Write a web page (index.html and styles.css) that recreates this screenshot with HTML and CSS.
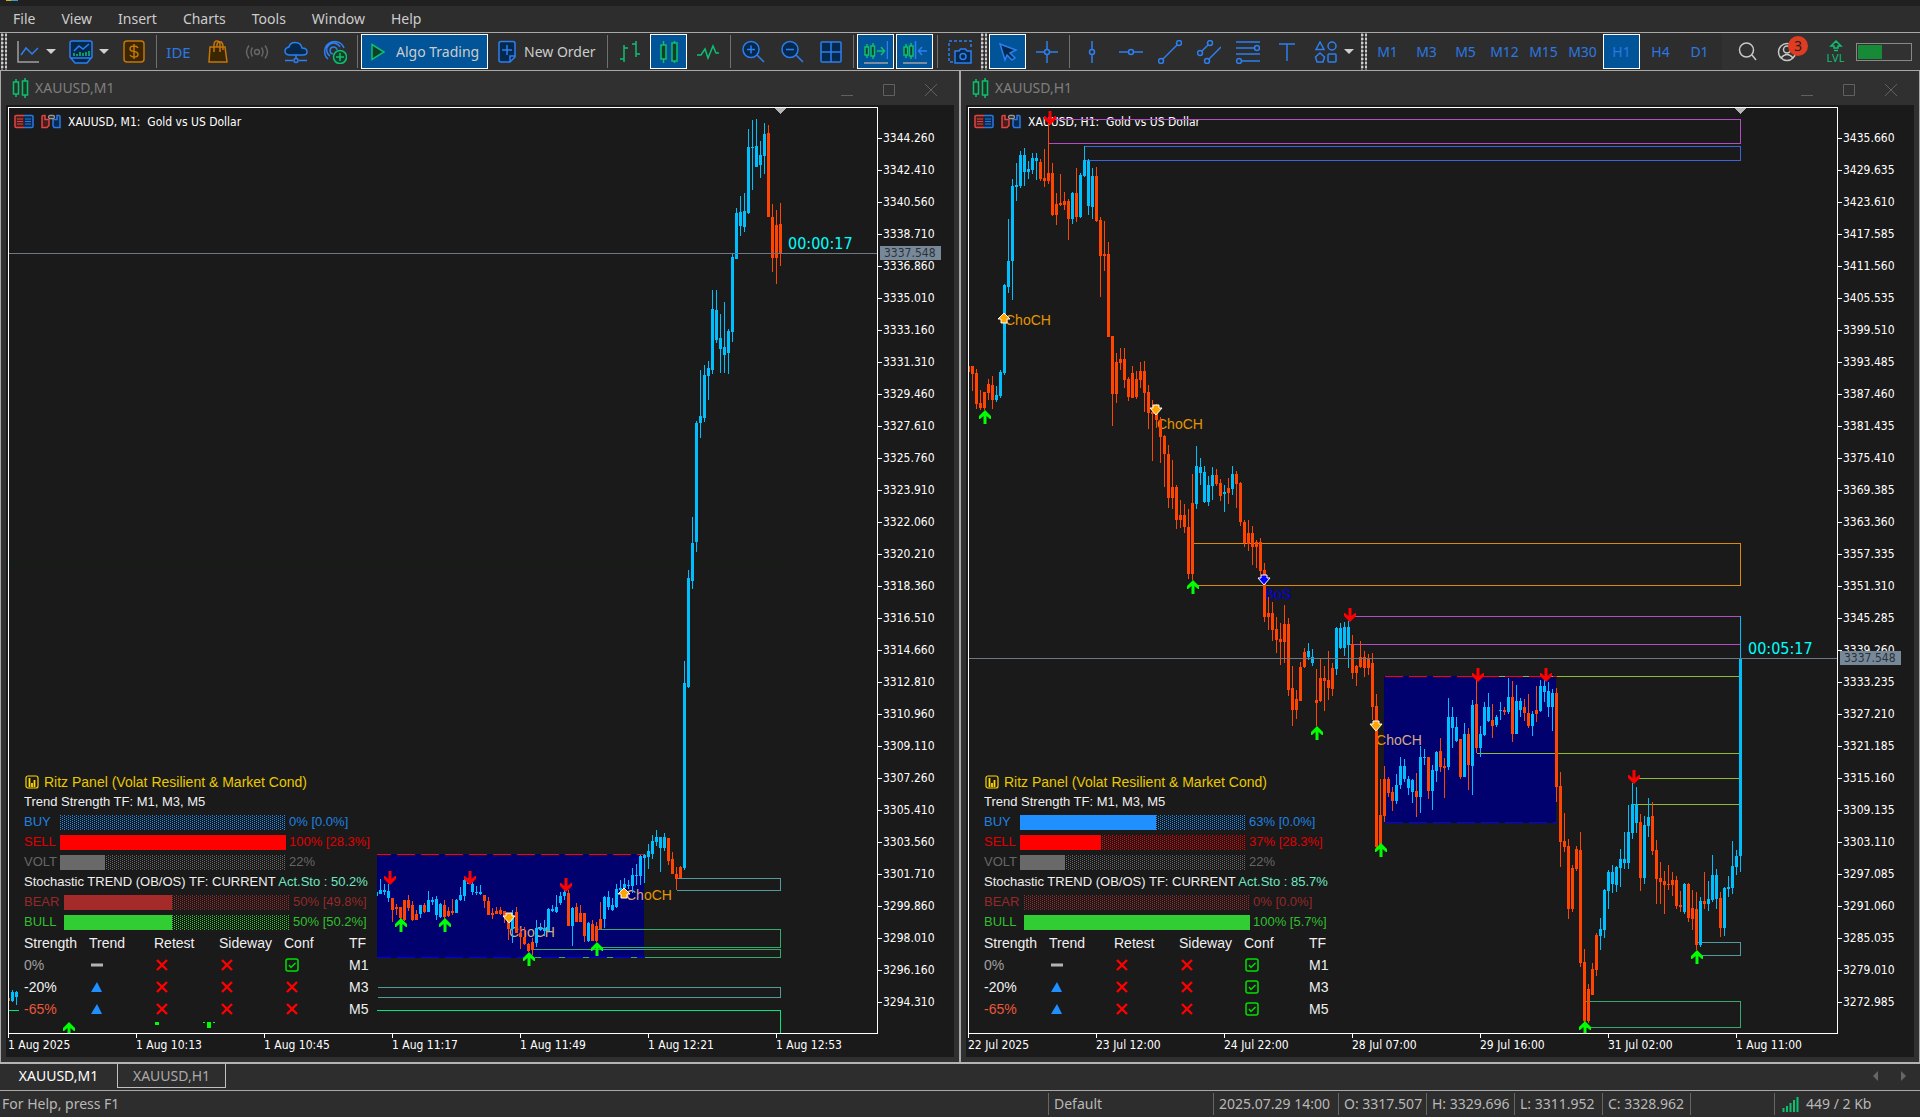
FILE: index.html
```html
<!DOCTYPE html>
<html lang="en">
<head>
<meta charset="utf-8">
<title>XAUUSD,M1</title>
<link rel="stylesheet" href="styles.css">
</head>
<body>
<svg class="defs" aria-hidden="true">
  <symbol id="up" viewBox="0 0 12 14"><path d="M6 0L12 6V9H11L7.500 6V14H4.500V6L1 9H0V6Z"/></symbol>
  <symbol id="down" viewBox="0 0 12 14"><path d="M6 14L12 8V5H11L7.500 8V0H4.500V8L1 5H0V8Z"/></symbol>
  <symbol id="mark-down" viewBox="0 0 14 12"><path d="M4 1H10V4H13L7 11L1 4H4Z" stroke="#fff"/></symbol>
  <symbol id="mark-up" viewBox="0 0 14 12"><path d="M4 11H10V7H13L7 1L1 7H4Z" stroke="#fff"/></symbol>
  <symbol id="cross" viewBox="0 0 14 14"><path d="M2 2L12 12M12 2L2 12" stroke="#f00" stroke-width="2.4"/></symbol>
  <symbol id="check" viewBox="0 0 14 14"><rect x="1" y="1" width="12" height="12" rx="2" fill="none" stroke="#00e000" stroke-width="1.5"/><path d="M4 7L6 9.500L10.500 5" fill="none" stroke="#00e000" stroke-width="1.5"/></symbol>
  <symbol id="flat" viewBox="0 0 14 14"><path d="M1 7H13" stroke="#b4b4b4" stroke-width="3"/></symbol>
  <symbol id="rise" viewBox="0 0 14 14"><path d="M7 2L12 12H1Z" fill="#1e90ff"/></symbol>
  <symbol id="candles" viewBox="0 0 18 20"><path d="M4 1V19M13 0V20" stroke="#0fbf70" stroke-width="1.5"/><path d="M1.500 4H6.500V16H1.500ZM10.500 3H15.500V17H10.500Z" fill="#1d3a24" stroke="#0fbf70" stroke-width="1.5"/></symbol>
  <symbol id="book" viewBox="0 0 20 14"><path d="M10 1H2Q1 1 1 2V12Q1 13 2 13H10" fill="#4a1c1c" stroke="#e04444" stroke-width="1.500"/><path d="M10 1H18Q19 1 19 2V12Q19 13 18 13H10" fill="#062a50" stroke="#2b78e4" stroke-width="1.500"/><path d="M3 4.500H9M3 7H9M3 9.500H9" stroke="#e04444"/><path d="M11 4.500H17M11 7H17M11 9.500H17" stroke="#2b78e4"/></symbol>
  <symbol id="trade" viewBox="0 0 20 14"><path d="M1 2Q1 1 2 1H4V5H8V11L6 13H1Z" fill="#4a1c1c" stroke="#e04444" stroke-width="1.500"/><path d="M19 2Q19 1 18 1H16V5H12V11L13 13H19Z" fill="#062a50" stroke="#2b78e4" stroke-width="1.500"/><rect x="7.500" y="1" width="6" height="3" rx="1.500" fill="none" stroke="#999" stroke-width="1.300"/></symbol>
  <symbol id="panel" viewBox="0 0 14 14"><rect x="1" y="1" width="12" height="12" rx="2" fill="none" stroke="#ffd700" stroke-width="1.200"/><path d="M4.500 3V12M7 8V12M9.500 5V12" stroke="#ffd700" stroke-width="1.800"/></symbol>
</svg>

<div class="caption"><i></i><i></i></div>
<nav class="menu">
  <a href="#">File</a><a href="#">View</a><a href="#">Insert</a><a href="#">Charts</a><a href="#">Tools</a><a href="#">Window</a><a href="#">Help</a>
</nav>

<div class="toolbar">
  <div class="grip"></div>
  <button class="drop" aria-label="Chart"><svg viewBox="0 0 24 24"><path class="gy" d="M2 1V22H23"/><path class="bl" d="M5 15L10 8L16 14L22 8"/></svg></button>
  <button class="drop" aria-label="Indicators"><svg viewBox="0 0 24 24"><path class="bl fb" d="M1 3Q1 1 3 1H21Q23 1 23 3V17L18 23H6L1 17ZM1 18H23"/><path class="bl" d="M5 11L10 6L14 9L20 4"/><path class="gr" d="M5 16V13M8 16V14M11 16V12M14 16V13M17 16V12M20 16V11"/></svg></button>
  <button aria-label="Dollar"><svg viewBox="0 0 24 24"><rect class="or fo" x="2" y="1" width="20" height="21" rx="3"/><path class="or" d="M16 8Q15 6 12 6Q8 6 8 9Q8 11 12 11.500Q16 12 16 14.500Q16 17 12 17Q9 17 8 15M12 4V19"/></svg></button>
  <div class="sep"></div>
  <button class="blue ide">IDE</button>
  <button aria-label="Market"><svg viewBox="0 0 24 24"><path class="or fo" d="M4 7H19L21 22H3Z"/><path class="or" d="M8 12V5Q8 1 11 1Q14 1 14 5V12M11 7V4Q12 1 15 2Q17 3 17 7V10"/></svg></button>
  <button aria-label="Signals"><svg viewBox="0 0 24 24"><g class="dim"><circle cx="12" cy="12" r="2.500"/><path d="M7.500 7.500Q4.500 12 7.500 16.500M16.500 7.500Q19.500 12 16.500 16.500M4 5.500Q-1 12 4 18.500M20 5.500Q25 12 20 18.500"/></g></svg></button>
  <button aria-label="VPS"><svg viewBox="0 0 24 24"><path class="bl fb" d="M6 15Q1 15 1 11Q1 8 5 7Q6 2.500 11 2.500Q17 2.500 18 8Q23 8 23 12Q23 15 19 15Z"/><path class="bl" d="M12 15V19M1 20.500H9M15 20.500H23"/><circle class="bl" cx="12" cy="20.500" r="2"/></svg></button>
  <button aria-label="Broadcast"><svg viewBox="0 0 24 24"><path class="bl" d="M5 19A10 10 0 1 1 21 8M7 16A7 7 0 1 1 17 7M10 14A3.500 3.500 0 1 1 14 10"/><circle class="gr fg" cx="17" cy="17" r="6.500"/><path class="gr" d="M17 13V21M13 17H21"/></svg></button>
  <div class="sep"></div>
  <button class="wide on algo"><svg viewBox="0 0 24 24"><path class="gr fg" d="M6 4.500L18 12L6 19.500Z"/></svg>Algo Trading</button>
  <button class="wide order"><svg viewBox="0 0 24 24"><path class="bl fb" d="M6 1.500H18Q20 1.500 20 3.500V17L15 22H6Q4 22 4 20V3.500Q4 1.500 6 1.500Z"/><path class="bl" d="M12 5V15M7 10H17M20 16H15V22"/></svg>New Order</button>
  <div class="sep"></div>
  <button aria-label="Bars"><svg viewBox="0 0 24 24"><path class="gr" d="M6 5V22M2 19H6M6 8H10M18 1V17M14 4H18M18 14H22"/></svg></button>
  <button class="on" aria-label="Candles"><svg viewBox="0 0 24 24"><path class="gr" d="M6.500 1V23M17.500 1V23"/><path class="gr fg" d="M4 5H9V19H4ZM15 3H20V21H15Z"/></svg></button>
  <button aria-label="Line"><svg viewBox="0 0 24 24"><path class="gr" d="M1 15H5L9 9L12 18L17 6L20 13H23"/></svg></button>
  <div class="sep"></div>
  <button aria-label="Zoom in"><svg viewBox="0 0 24 24"><circle class="bl fb" cx="10" cy="9.500" r="8"/><path class="bl" d="M16 15L23 22M6 9.500H14M10 5.500V13.500"/></svg></button>
  <button aria-label="Zoom out"><svg viewBox="0 0 24 24"><circle class="bl fb" cx="10" cy="9.500" r="8"/><path class="bl" d="M16 15L23 22M6 9.500H14"/></svg></button>
  <button aria-label="Tile"><svg viewBox="0 0 24 24"><rect class="bl fb" x="2" y="2" width="20" height="20" rx="1"/><path class="bl" d="M12 2V22M2 12H22"/></svg></button>
  <div class="sep"></div>
  <button class="on" aria-label="Auto scroll"><svg viewBox="0 0 24 24"><path class="gr" d="M3 4V18M9 3V19M13 11H20M17 7L20.500 11L17 15"/><path class="gr fg" d="M1 7H4.500V15H1ZM7 6H10.500V16H7Z"/><path class="bl" d="M23.500 1V19"/><path class="gy" d="M0 23H24"/></svg></button>
  <button class="on" aria-label="Chart shift"><svg viewBox="0 0 24 24"><path class="gr" d="M3 4V18M8 3V19"/><path class="gr fg" d="M1 7H4.500V15H1ZM6.500 6H10V16H6.500Z"/><path class="bl" d="M12.500 1V19M24 11H16M19 7L15.500 11L19 15"/><path class="gy" d="M0 23H24"/></svg></button>
  <div class="sep"></div>
  <button aria-label="Screenshot"><svg viewBox="0 0 24 24"><path class="bl dash" d="M5 22H1V1H23V8"/><path class="bl fb" d="M7 11H11L12.500 9H17.500L19 11H23V23H7Z"/><circle class="bl" cx="15" cy="16.500" r="3"/></svg></button>
  <div class="grip second"></div>
  <button class="on" aria-label="Cursor"><svg viewBox="0 0 24 24"><path class="bl fb" d="M4 4L20 10L14 13L19 18L16 20L11 15L9 20Z"/></svg></button>
  <button aria-label="Crosshair"><svg viewBox="0 0 24 24"><path class="bl" d="M12 1V9.500M12 14.500V23M1 12H9.500M14.500 12H23"/><circle class="bl" cx="12" cy="12" r="2.500"/></svg></button>
  <div class="sep"></div>
  <button aria-label="Vertical line"><svg viewBox="0 0 24 24"><path class="bl" d="M12 1V9.500M12 14.500V23"/><circle class="bl" cx="12" cy="12" r="2.500"/></svg></button>
  <button aria-label="Horizontal line"><svg viewBox="0 0 24 24"><path class="bl" d="M0 12H9.500M14.500 12H24"/><circle class="bl" cx="12" cy="12" r="2.500"/></svg></button>
  <button aria-label="Trendline"><svg viewBox="0 0 24 24"><path class="bl" d="M5 19L19 5"/><circle class="bl" cx="3" cy="21" r="2.500"/><circle class="bl" cx="21" cy="3" r="2.500"/></svg></button>
  <button aria-label="Channel"><svg viewBox="0 0 24 24"><path class="bl" d="M5 11L11 5M12 19L24 7"/><circle class="bl" cx="3" cy="13" r="2.500"/><circle class="bl" cx="13" cy="3" r="2.500"/><circle class="bl" cx="10" cy="21" r="2.500"/></svg></button>
  <button aria-label="Fibonacci"><svg viewBox="0 0 24 24"><path class="bl" d="M0 2H24M0 8H18M0 14H24M6 21H24"/><circle class="bl" cx="21" cy="8" r="2.500"/><circle class="bl" cx="3" cy="21" r="2.500"/></svg></button>
  <button aria-label="Text"><svg viewBox="0 0 24 24"><path class="bl" d="M4 4H20M12 4V21"/></svg></button>
  <button class="drop" aria-label="Shapes"><svg viewBox="0 0 24 24"><path class="bl" d="M6 2L10 9.500H2ZM6 13L10.500 17L9 22H3L1.500 17Z"/><circle class="bl" cx="18" cy="6" r="4"/><rect class="bl" x="14" y="14" width="8" height="8" rx="1"/></svg></button>
  <div class="grip"></div>
  <button class="blue">M1</button><button class="blue">M3</button><button class="blue">M5</button><button class="blue">M12</button><button class="blue">M15</button><button class="blue">M30</button><button class="blue on">H1</button><button class="blue">H4</button><button class="blue">D1</button>
  <div class="account">
    <button aria-label="Search"><svg viewBox="0 0 24 24"><g class="lt"><circle cx="10.500" cy="10" r="7"/><path d="M16 15L20 20"/></g></svg></button>
    <button class="user" aria-label="Account"><svg viewBox="0 0 24 24"><g class="lt"><circle cx="12" cy="12" r="8.500"/><circle cx="12" cy="9.500" r="3.500"/><path d="M6 18Q12 11 18 18"/></g></svg><span class="badge">3</span></button>
    <button class="lvl" aria-label="Level"><svg viewBox="0 0 14 12"><path class="gr" d="M7 1L12 6H9V8H5V6H2ZM5 10.500H9"/></svg>LVL</button>
    <div class="meter"><span></span></div>
  </div>
</div>

<main class="desk">
  <section class="window" data-chart="m1">
    <header class="title"><svg><use href="#candles"/></svg><h2>XAUUSD,M1</h2><button aria-label="Minimize"><svg viewBox="0 0 12 12"><path d="M0 11.500H12"/></svg></button><button aria-label="Maximize"><svg viewBox="0 0 12 12"><path d="M.5.5H11.500V11.500H.5Z"/></svg></button><button aria-label="Close"><svg viewBox="0 0 12 12"><path d="M0 0L12 12M12 0L0 12"/></svg></button></header>
    <div class="chart">
      <div class="plot">
        <svg class="drawing" viewBox="9 108 868 925" preserveAspectRatio="xMinYMin meet">
          <rect x="377" y="854" width="267" height="104" fill="#00006e"/>
          <g class="lines" transform="translate(.5 .5)">
            <path d="M8 563H784" stroke="#0a260a"/>
            <path d="M676 878H780V890H676M377 987H780V997H377" stroke="#559a9a"/>
            <path d="M597 929H780V947H597M531 949H780V957H531" stroke="#35ab6b"/>
            <path d="M8 1010H780V1034" stroke="#00e878"/>
            <path d="M372 854H644" stroke="#ff0000" stroke-dasharray="18 6"/>
            <path d="M372 957H644" stroke="#0000f0" stroke-dasharray="18 6"/>
          </g>
          <g class="label"><text x="509" y="937" class="tan">ChoCH</text><text x="626" y="900"><tspan class="tan">Ch</tspan>oCH</text></g>
          <g class="candles"></g>
          <path class="price" d="M8 253.500H877"/>
          <g class="signals"></g>
          <path d="M155 1022h4v3h-4zM207 1022h4v6h-4zM203 1022h2v1h-2zM213 1022h2v1h-2z" fill="#0f0"/>
          <path d="M775 108H786L780.500 114Z" fill="#b4b4b4"/>
          <text x="788" y="249" class="timer">00:00:17</text>
        </svg>
        <p class="symbol"><svg><use href="#book"/></svg><svg><use href="#trade"/></svg><span>XAUUSD, M1:&nbsp; Gold vs US Dollar</span></p>
        <div class="ritz">
          <p class="name"><svg><use href="#panel"/></svg>Ritz Panel (Volat Resilient &amp; Market Cond)</p>
          <p>Trend Strength TF: M1, M3, M5</p>
          <p class="row buy"><b>BUY</b><i><span style="width:0%"></span></i>0% [0.0%]</p>
          <p class="row sell"><b>SELL</b><i><span style="width:100%"></span></i>100% [28.3%]</p>
          <p class="row volt"><b>VOLT</b><i><span style="width:20%"></span></i>22%</p>
          <p>Stochastic TREND (OB/OS) TF: CURRENT <em>Act.Sto : 50.2%</em></p>
          <p class="row bear"><b>BEAR</b><i><span style="width:48%"></span></i>50% [49.8%]</p>
          <p class="row bull"><b>BULL</b><i><span style="width:48%"></span></i>50% [50.2%]</p>
          <table>
            <tr><th>Strength</th><th>Trend</th><th>Retest</th><th>Sideway</th><th>Conf</th><th>TF</th></tr>
            <tr><td class="mute">0%</td><td><svg><use href="#flat"/></svg></td><td><svg><use href="#cross"/></svg></td><td><svg><use href="#cross"/></svg></td><td><svg><use href="#check"/></svg></td><td>M1</td></tr>
            <tr><td>-20%</td><td><svg><use href="#rise"/></svg></td><td><svg><use href="#cross"/></svg></td><td><svg><use href="#cross"/></svg></td><td><svg><use href="#cross"/></svg></td><td>M3</td></tr>
            <tr><td class="weak">-65%</td><td><svg><use href="#rise"/></svg></td><td><svg><use href="#cross"/></svg></td><td><svg><use href="#cross"/></svg></td><td><svg><use href="#cross"/></svg></td><td>M5</td></tr>
          </table>
        </div>
      </div>
      <div class="prices"></div>
      <div class="times"><span>1 Aug 2025</span><span>1 Aug 10:13</span><span>1 Aug 10:45</span><span>1 Aug 11:17</span><span>1 Aug 11:49</span><span>1 Aug 12:21</span><span>1 Aug 12:53</span></div>
    </div>
  </section>

  <section class="window" data-chart="h1">
    <header class="title"><svg><use href="#candles"/></svg><h2>XAUUSD,H1</h2><button aria-label="Minimize"><svg viewBox="0 0 12 12"><path d="M0 11.500H12"/></svg></button><button aria-label="Maximize"><svg viewBox="0 0 12 12"><path d="M.5.5H11.500V11.500H.5Z"/></svg></button><button aria-label="Close"><svg viewBox="0 0 12 12"><path d="M0 0L12 12M12 0L0 12"/></svg></button></header>
    <div class="chart">
      <div class="plot">
        <p class="symbol"><svg><use href="#book"/></svg><svg><use href="#trade"/></svg><span>XAUUSD, H1:&nbsp; Gold vs US Dollar</span></p>
        <svg class="drawing over" viewBox="9 108 868 925" preserveAspectRatio="xMinYMin meet">
          <rect x="424" y="676" width="172" height="147" fill="#00006e"/>
          <g class="lines" transform="translate(.5 .5)">
            <path d="M88 119H780V143H88M388 616H780V644H388" stroke="#b44cc4"/>
            <path d="M124 146H780V160H124" stroke="#3e64dc"/>
            <path d="M232 543H780V585H232" stroke="#dc8a0a"/>
            <path d="M516 676H780M516 753H780M672 778H780M672 804H780" stroke="#90bb2f"/>
            <path d="M736 942H780V955H736" stroke="#559a9a"/>
            <path d="M624 1001H780V1027H624" stroke="#35ab6b"/>
            <path d="M424 676H596" stroke="#ff0000" stroke-dasharray="18 6"/>
            <path d="M424 822H596" stroke="#0000ff" stroke-dasharray="18 6"/>
          </g>
          <g class="label"><text x="45" y="325">ChoCH</text><text x="197" y="429">ChoCH</text><text x="305" y="599" class="bos">BoS</text><text x="416" y="745">C<tspan class="tan">hoCH</tspan></text></g>
          <g class="candles"></g>
          <path class="price" d="M8 658.500H877"/>
          <g class="signals"></g>
          <path d="M775 108H786L780.500 114Z" fill="#b4b4b4"/>
          <text x="788" y="654" class="timer">00:05:17</text>
        </svg>
        <div class="ritz">
          <p class="name"><svg><use href="#panel"/></svg>Ritz Panel (Volat Resilient &amp; Market Cond)</p>
          <p>Trend Strength TF: M1, M3, M5</p>
          <p class="row buy"><b>BUY</b><i><span style="width:60%"></span></i>63% [0.0%]</p>
          <p class="row sell"><b>SELL</b><i><span style="width:36%"></span></i>37% [28.3%]</p>
          <p class="row volt"><b>VOLT</b><i><span style="width:20%"></span></i>22%</p>
          <p>Stochastic TREND (OB/OS) TF: CURRENT <em>Act.Sto : 85.7%</em></p>
          <p class="row bear"><b>BEAR</b><i><span style="width:0%"></span></i>0% [0.0%]</p>
          <p class="row bull"><b>BULL</b><i><span style="width:100%"></span></i>100% [5.7%]</p>
          <table>
            <tr><th>Strength</th><th>Trend</th><th>Retest</th><th>Sideway</th><th>Conf</th><th>TF</th></tr>
            <tr><td class="mute">0%</td><td><svg><use href="#flat"/></svg></td><td><svg><use href="#cross"/></svg></td><td><svg><use href="#cross"/></svg></td><td><svg><use href="#check"/></svg></td><td>M1</td></tr>
            <tr><td>-20%</td><td><svg><use href="#rise"/></svg></td><td><svg><use href="#cross"/></svg></td><td><svg><use href="#cross"/></svg></td><td><svg><use href="#check"/></svg></td><td>M3</td></tr>
            <tr><td class="weak">-65%</td><td><svg><use href="#rise"/></svg></td><td><svg><use href="#cross"/></svg></td><td><svg><use href="#cross"/></svg></td><td><svg><use href="#check"/></svg></td><td>M5</td></tr>
          </table>
        </div>
      </div>
      <div class="prices"></div>
      <div class="times"><span>22 Jul 2025</span><span>23 Jul 12:00</span><span>24 Jul 22:00</span><span>28 Jul 07:00</span><span>29 Jul 16:00</span><span>31 Jul 02:00</span><span>1 Aug 11:00</span></div>
    </div>
  </section>
</main>

<div class="tabs">
  <button class="current">XAUUSD,M1</button><button>XAUUSD,H1</button>
  <div class="scroll"><svg viewBox="0 0 6 10"><path d="M5 0V10L0 5Z"/></svg><svg viewBox="0 0 6 10"><path d="M1 0V10L6 5Z"/></svg></div>
</div>
<footer class="status">
  <span class="help">For Help, press F1</span><span class="profile">Default</span><span class="date">2025.07.29 14:00</span><span class="quote">O: 3317.507</span><span class="quote">H: 3329.696</span><span class="quote">L: 3311.952</span><span class="quote">C: 3328.962</span><span class="blank"></span><span class="net"><svg viewBox="0 0 18 15"><path d="M1.500 11V15M5 9V15M8.500 6V15M12 3V15M15.500 0V15"/></svg>449 / 2 Kb</span>
</footer>
<script src="charts.js"></script>
</body>
</html>
```
FILE: styles.css
```css
* { box-sizing: border-box; }
body {
  margin: 0; height: 100vh; display: flex; flex-direction: column; overflow: hidden;
  background: #2d2d2d; color: #ccc;
  font: 14px/20px "Noto Sans", "Open Sans", sans-serif;
}
p, h2 { margin: 0; font: inherit; }
button { border: 0; padding: 0; margin: 0; background: none; color: inherit; font: inherit; }
svg { display: block; flex: none; }
.defs { position: absolute; width: 0; height: 0; }

.caption { height: 6px; background: #202020; display: flex; padding-left: 6px; flex: none; }
.caption i { width: 5px; height: 1px; background: #c8b820; }
.caption i + i { width: 7px; background: #2f9fd0; }
.menu { height: 26px; display: flex; align-items: center; gap: 26px; padding-left: 13px; flex: none; }
.menu a { color: #ccc; text-decoration: none; }

/* toolbar */
.toolbar {
  height: 39px; display: flex; align-items: center; gap: 2px; flex: none;
  border-top: 1px solid #a8a8a8; border-bottom: 1px solid #a8a8a8;
}
.toolbar button { width: 37px; height: 35px; display: flex; align-items: center; justify-content: center; flex: none; white-space: nowrap; }
.toolbar svg { width: 24px; height: 24px; fill: none; stroke-width: 1.5; }
.toolbar .on { background: #005497; border: 1px solid #fff; }
.toolbar .drop { width: 51px; justify-content: flex-start; padding-left: 7px; gap: 6px; }
.drop::after { content: ""; border: 5px solid transparent; border-top-color: #d0d0d0; border-bottom: 0; }
.toolbar .blue { color: #2b78e4; }
.toolbar .ide { font-size: 15px; }
.toolbar .wide { justify-content: flex-start; color: #ccc; }
.toolbar .algo { width: 127px; padding-left: 4px; gap: 6px; }
.toolbar .order { width: 113px; padding-left: 5px; gap: 5px; }
.sep { width: 1px; height: 33px; margin: 0 1px 0 2px; background: #707070; flex: none; }
.grip { width: 7px; align-self: stretch; flex: none; background: radial-gradient(circle at 1px 2px, #ccc 1px, transparent 2px) 1px 0 / 4px 4px; }
.bl { stroke: #2d7ff0; } .gr { stroke: #0fbf70; } .or { stroke: #c47606; } .gy { stroke: #a0a0a0; }
.fb { fill: #05294c; } .fg { fill: #123f2a; } .fo { fill: #3a2600; }
.dim { stroke: #666; } .lt { stroke: #c8c8c8; } .dash { stroke-dasharray: 3 2; }
.account { align-self: stretch; flex: 1; margin-left: 2px; padding-right: 8px; background: #313131; display: flex; align-items: center; gap: 2px; justify-content: flex-end; }
.account .user { position: relative; margin-right: 10px; }
.badge { position: absolute; left: 20px; top: 2px; width: 20px; height: 20px; border-radius: 10px; background: #e03c21; color: #222; line-height: 20px; }
.account .lvl { flex-direction: column; color: #0fbf70; font-size: 11px; line-height: 11px; }
.account .lvl svg { width: 14px; height: 12px; }
.meter { width: 56px; height: 18px; border: 1px solid #888; padding: 1px; }
.meter span { display: block; width: 24px; height: 100%; background: #178a38; }

/* chart windows */
.desk { flex: 1; min-height: 0; display: flex; }
.window { flex: 1; min-width: 0; display: flex; flex-direction: column; padding: 0 5px 5px; border: solid #a8a8a8; border-width: 0 1px; background: #303030; }
.title { height: 34px; display: flex; align-items: center; padding: 0 17px 0 6px; gap: 30px; flex: none; }
.title > svg { width: 18px; height: 20px; }
.title h2 { flex: 1; margin-left: -25px; color: #7f7f7f; }
.title button svg { width: 12px; height: 12px; margin-top: 3px; fill: none; stroke: #606060; }
.chart { flex: 1; min-height: 0; background: #1a1a1a; padding: 2px 0 0 2px; display: grid; grid-template: minmax(0, 1fr) 23px / minmax(0, 1fr) 76px; color: #fff; font: 12px/16px "DejaVu Sans Condensed", "Noto Sans", sans-serif; }
.plot { position: relative; border: 1px solid #fff; overflow: hidden; }
.drawing { width: 100%; height: 100%; shape-rendering: crispEdges; }
.drawing.over { position: relative; }
.signals { shape-rendering: geometricPrecision; }
.lines { fill: none; }
.price { stroke: #6c7884; }
.bull-c { fill: #00bfff; } .bear-c { fill: #ff4500; }
.label { font: 14px "Liberation Sans", sans-serif; fill: #e69500; }
.label .tan { fill: #d2aa82; }
.label .bos { fill: #0000e0; }
.timer { font: 16px "DejaVu Sans Condensed", "Noto Sans", sans-serif; fill: #00ffff; }
.symbol { position: absolute; left: 5px; top: 5px; display: flex; gap: 7px; align-items: center; white-space: nowrap; }
.symbol svg { width: 20px; height: 15px; }
.symbol span { padding-top: 1px; }
.prices { position: relative; padding-top: 15px; overflow: hidden; }
.prices div { height: 32px; display: flex; align-items: center; gap: 1px; }
.prices div::before { content: ""; width: 4px; height: 1px; background: #fff; }
.prices output { position: absolute; left: 2px; width: 61px; height: 14px; padding-left: 4px; line-height: 15px; background: #778899; color: #2c3238; }
.times { display: flex; grid-column: 1 / -1; overflow: hidden; }
.times span { width: 128px; flex: none; padding-top: 3px; background: linear-gradient(#fff, #fff) no-repeat 0 0 / 1px 4px; white-space: nowrap; }

/* indicator panel */
.ritz { position: absolute; left: 10px; bottom: 11px; width: 358px; padding: 2px 0 2px 5px; background: #1a1a1a; color: #f0f0f0; font: 13px/20px "Liberation Sans", sans-serif; white-space: nowrap; }
.ritz .name { display: flex; align-items: center; gap: 5px; padding-left: 1px; color: #e8c800; font-size: 14px; }
.ritz svg { width: 14px; height: 14px; }
.ritz em { font-style: normal; color: #6fe8c0; }
.row { display: flex; align-items: center; gap: 3px; }
.row b { width: 33px; font-weight: 400; }
.row i {
  display: block; width: 226px; height: 15px;
  background:
    conic-gradient(from 270deg at 1px 1px, currentColor 25%, transparent 0) 0 0 / 4px 2px,
    conic-gradient(from 270deg at 1px 1px, currentColor 25%, transparent 0) 2px 1px / 4px 2px;
}
.row span { display: block; height: 100%; background: currentColor; }
.buy { color: #1e82e0; } .sell { color: #e00000; } .volt { color: #666; } .bear { color: #962828; } .bull { color: #2fc02f; }
.buy i { color: #1e90ff; } .sell i { color: #f00; } .volt i { color: #696969; } .bear i { color: #a52a2a; } .bull i { color: #32cd32; }
.bear b, .bull b { width: 37px; }
.ritz table { table-layout: fixed; width: 350px; border-collapse: collapse; font-size: 14px; }
.ritz th, .ritz td { padding: 0; height: 22px; width: 65px; text-align: left; font-weight: 400; line-height: 22px; }
.ritz th:last-child { width: 25px; }
.ritz td svg { margin-left: 1px; }
.mute { color: #a0a0a0; } .weak { color: #e8583c; }

/* bottom bars */
.tabs { height: 28px; display: flex; align-items: flex-start; border-top: 2px solid #b4b4b4; flex: none; }
.tabs button { width: 109px; height: 24px; border: 1px solid #c0c0c0; border-top: 0; color: #aaa; }
.tabs .current { width: 117px; border: 0; color: #fff; }
.scroll { margin: 7px 14px 0 auto; display: flex; gap: 21px; }
.scroll svg { width: 6px; height: 10px; fill: #666; }
.status { height: 27px; display: flex; align-items: center; border-top: 1px solid #a8a8a8; flex: none; color: #b8b8b8; white-space: nowrap; }
.status span { height: 22px; line-height: 22px; padding-left: 5px; border-left: 1px solid #666; }
.status .help { flex: 1; border: 0; padding-left: 2px; }
.status .profile { width: 165px; } .status .date { width: 125px; } .status .quote { width: 88px; } .status .blank { width: 84px; }
.status .net { width: 146px; display: flex; align-items: center; gap: 6px; padding-left: 7px; }
.net svg { width: 18px; height: 15px; stroke: #0fbf70; stroke-width: 2; }
```
FILE: charts.js
```js
// Candles are 4px apart. Each entry: direction (u/d), then high, body top, body bottom, low.
const charts = {
  m1: {
    top: 3344.26, step: 1.85, last: 253,
    series: [
      [8, 'd998,998,1001,1001 u990,992,1001,1002 u991,992,997,1005'],
      [376, `u892,892,896,896 u879,890,894,894 u884,890,892,895 u884,891,898,902 d898,898,910,922 d904,907,909,915
       d907,907,918,920 d900,900,920,921 d895,900,908,911 d901,905,920,921 d910,914,920,920 u905,905,914,918
       d903,905,912,913 u891,900,912,912 u897,900,902,905 u896,899,915,920 u903,904,917,918 d900,905,917,919
       d907,911,916,917 d899,911,913,915 u899,900,913,913 u887,895,900,901 u879,880,896,901 u878,879,884,884
       u880,884,892,895 u886,892,893,895 u885,892,894,895 d895,895,901,908 d897,901,915,915 d908,913,915,919
       d907,911,914,914 d907,910,914,915 d911,911,917,923 d913,917,929,940 u910,915,929,943 d907,912,933,933
       d928,933,937,949 d927,937,944,945 d943,944,951,952 d938,942,950,955 u920,928,943,947 u923,928,930,931
       u920,928,931,936 u908,909,931,931 u905,909,911,912 u895,907,912,913 u892,896,903,905 u886,892,896,900
       d890,893,926,926 u907,908,926,946 d903,907,922,922 d905,913,922,922 d913,913,936,942 u922,923,941,942
       d920,924,941,941 d922,926,941,942 d902,919,929,929 u896,897,919,928 u891,897,907,910 u898,905,910,911
       u884,889,907,908 u880,888,890,892 u878,884,888,890 u880,885,886,889 u868,875,886,893 u864,875,876,885
       u855,856,876,885 u854,855,858,883 u844,851,857,869 u835,841,854,859 u830,837,842,846 u837,837,848,872
       u833,837,848,851 d838,838,861,865 d852,859,874,874 d867,874,879,890 d866,867,878,878 u661,683,868,870
       u570,578,687,688 u517,543,581,589 u421,423,542,552 u370,416,423,438 u365,375,418,422 u361,368,376,400
       u290,309,370,374 u290,310,340,343 u314,338,349,373 u302,347,355,373 u329,331,353,374 u253,257,332,342
       u208,213,259,259 u196,212,226,236 u193,211,227,232 u129,147,213,214 u120,147,148,190 u119,146,167,167
       u141,155,165,178 u123,134,156,174 d125,133,217,217 d204,217,258,272 d210,225,258,284 d203,224,254,266`]
    ],
    signals: 'down,384,871 down,464,871 down,560,878 up,395,918 up,439,918 up,523,952 up,591,942 up,63,1022 mark-down,502,912 mark-up,617,887'
  },
  h1: {
    top: 3435.66, step: 6.025, last: 658,
    series: [
      [8, `d365,366,372,372 d366,366,374,391 d369,373,404,409 d390,403,408,410 d392,392,408,410 d379,384,393,400
       d376,385,400,409 u386,395,400,402 u370,372,396,398 u284,285,373,375 u219,261,287,293 u179,186,261,300
       u163,185,187,201 u151,155,186,188 u148,155,172,186 u161,169,172,179 u153,158,170,174 u153,158,161,180
       d159,162,179,181 d149,178,181,187 d123,173,181,184 d163,173,215,216 d193,204,215,225 d174,203,205,206
       d192,201,205,210 d199,201,219,240 u192,193,219,224 d168,193,217,222 u173,175,217,218 u146,160,176,177
       u159,161,206,215 u168,176,207,219 d167,176,221,222 d217,220,256,297 d221,254,256,271 d242,254,337,337
       d336,336,394,426 d353,362,394,403 d348,359,363,370 d348,359,380,388 d377,379,397,401 d366,373,398,398
       d371,379,397,399 d362,371,380,388 d361,371,393,412 d385,392,413,429 d400,412,414,461 d404,410,420,428
       d417,420,437,463 d435,436,454,487 d445,454,498,508 d460,487,498,509 d485,487,520,529 d500,515,520,528
       d504,515,527,533 d509,527,574,579 d474,503,574,580 u446,466,504,509 u458,467,473,485 u466,472,502,503
       u476,485,502,506 u467,475,486,500 d469,475,484,486 d479,483,496,501 u485,492,494,512 d478,488,493,504
       u466,474,489,495 d471,474,484,508 d482,483,522,526 d520,522,543,547 d520,533,544,551 d526,533,547,565
       d540,542,547,568 d538,542,571,575 d563,570,617,622 d597,613,617,630 d602,613,630,641 d617,629,640,653
       d623,639,642,665 d605,624,642,663 d618,624,690,696 d666,688,710,726 d690,699,710,719 d662,667,701,701
       d648,652,667,668 u643,651,657,660 u649,657,663,666 d669,700,703,726 d658,678,701,702 d666,678,681,711
       d651,680,688,700 d663,668,689,696 u627,628,669,675 u623,628,648,649 u622,627,648,656 u621,627,645,668
       d635,644,673,679 d665,666,673,686 d641,657,667,668 d651,657,668,677 d654,658,668,675 d653,663,707,720
       d694,706,847,848 d779,815,845,850 d766,779,816,822 d777,779,793,797 d787,792,801,811 u774,785,801,804
       u757,766,785,789 u759,766,779,782 u776,779,788,795 u779,780,792,803 d773,791,797,817 u746,757,797,813
       u749,757,758,765 d757,757,791,799 u765,770,791,810 u751,752,771,782 d738,751,767,772 d758,766,768,798
       u698,717,767,770 u707,717,728,748 u717,727,741,742 d739,739,777,779 u723,734,777,777 d728,734,765,790
       u700,705,766,795 d680,704,748,753 u726,734,748,757 u702,707,735,736 u693,707,721,722 d704,720,726,738
       u715,717,725,727 u702,710,711,720 d707,710,712,715 u678,697,712,714 d681,697,734,742 u685,701,734,734
       u698,701,710,717 d699,707,713,721 d694,713,726,728 u711,714,726,736 d686,710,714,722 u680,686,711,712
       u680,686,692,702 u682,691,707,717 u689,693,707,731 d688,693,787,802 d772,786,842,867 d813,841,847,852
       d839,846,909,919 d865,868,909,912 d846,849,869,871 d832,850,963,967 d949,962,1021,1022 d984,989,1021,1023
       d963,969,995,995 d933,935,970,976 u918,929,936,950 u889,890,930,938 u870,872,891,909 u865,872,884,893
       u866,867,885,892 u849,859,868,887 u832,859,863,869 u805,832,863,869 u783,804,833,839 u787,804,823,833
       d814,822,878,891 u816,825,878,884 u798,817,826,837 d802,816,851,855 d840,850,879,904 d862,878,882,904
       d871,881,885,914 d865,884,885,890 d872,880,885,896 d876,880,906,909 d891,905,907,912 u883,884,912,914
       d883,884,918,922 d890,908,919,930 d892,909,945,950 u897,901,945,947 d872,901,904,909 u881,899,904,911
       u855,875,900,902 u869,875,899,909 d892,898,928,937 u887,888,928,936 u876,887,889,897 u841,866,888,894
       u850,856,867,875 u616,659,856,872`]
    ],
    signals: 'down,84,111 down,384,608 down,512,668 down,580,668 down,668,770 up,19,410 up,227,580 up,351,726 up,415,843 up,619,1021 up,731,950 mark-up,37,312 mark-down,189,404 mark-down,297,574,#0000ff mark-down,409,720'
  }
};

const sizes = { up: [12, 14], down: [12, 14], 'mark-up': [14, 12], 'mark-down': [14, 12] };
const colors = { up: '#00ff00', down: '#ff0000', 'mark-up': '#ffa500', 'mark-down': '#ffa500' };

for (const [name, chart] of Object.entries(charts)) {
  const win = document.querySelector(`[data-chart="${name}"]`);

  let candles = '';
  for (const [start, list] of chart.series) {
    list.trim().split(/\s+/).forEach((item, i) => {
      const x = start + i * 4;
      const [high, top, bottom, low] = item.slice(1).split(',').map(Number);
      candles += `<path class="${item[0] === 'u' ? 'bull-c' : 'bear-c'}" d="M${x} ${high}h1V${low}h-1zM${x - 1} ${top}h3V${bottom}h-3z"/>`;
    });
  }
  win.querySelector('.candles').innerHTML = candles;

  win.querySelector('.signals').innerHTML = chart.signals.split(' ').map(item => {
    const [kind, x, y, fill] = item.split(',');
    const [w, h] = sizes[kind];
    return `<use href="#${kind}" x="${x}" y="${y}" width="${w}" height="${h}" fill="${fill || colors[kind]}"/>`;
  }).join('');

  let labels = '';
  for (let i = 0; i < 28; i++) labels += `<div>${(chart.top - i * chart.step).toFixed(3)}</div>`;
  win.querySelector('.prices').innerHTML = labels + `<output style="top:${chart.last - 114}px">3337.548</output>`;
}
```
